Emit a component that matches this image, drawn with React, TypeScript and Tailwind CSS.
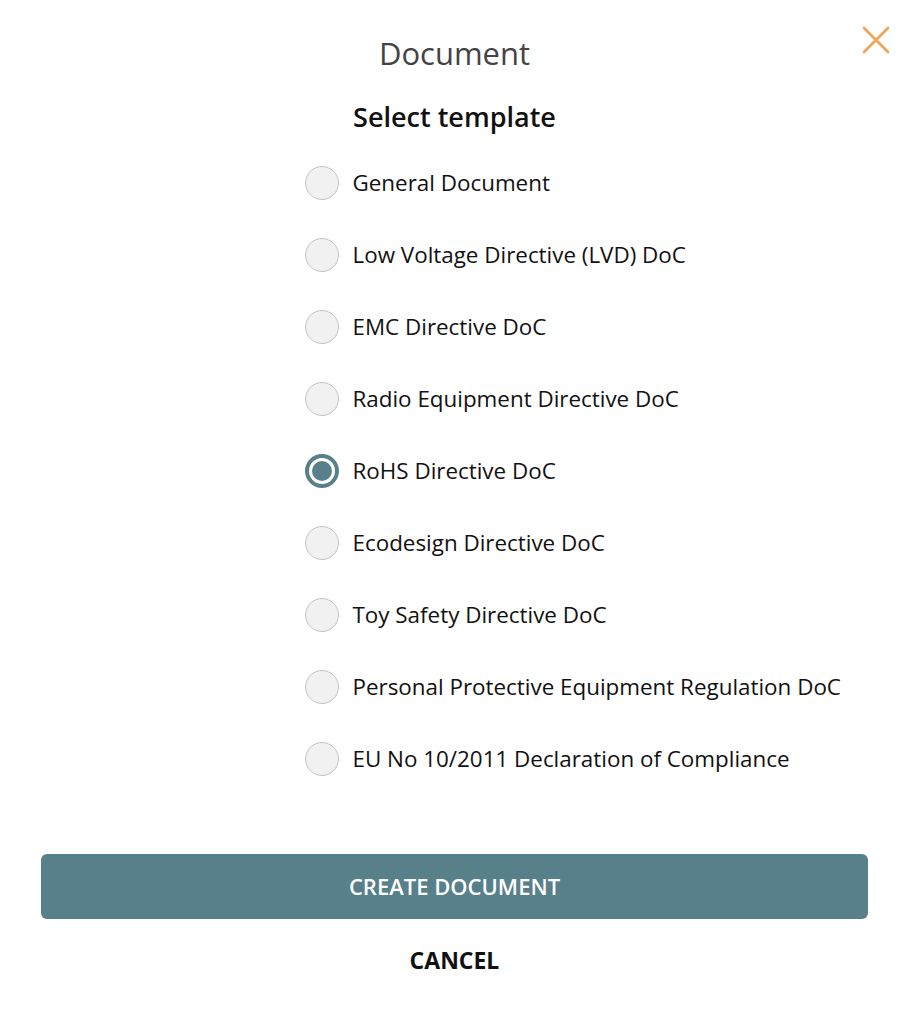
import React, { useState } from 'react';

const templates = [
  'General Document',
  'Low Voltage Directive (LVD) DoC',
  'EMC Directive DoC',
  'Radio Equipment Directive DoC',
  'RoHS Directive DoC',
  'Ecodesign Directive DoC',
  'Toy Safety Directive DoC',
  'Personal Protective Equipment Regulation DoC',
  'EU No 10/2011 Declaration of Compliance',
];

const Radio: React.FC<{ checked: boolean }> = ({ checked }) =>
  checked ? (
    <span className="flex h-[34px] w-[34px] shrink-0 items-center justify-center rounded-full bg-[#57808a]">
      <span className="flex h-[26px] w-[26px] items-center justify-center rounded-full bg-white">
        <span className="h-[20px] w-[20px] rounded-full bg-[#57808a]" />
      </span>
    </span>
  ) : (
    <span className="h-[34px] w-[34px] shrink-0 rounded-full border border-[#c4c4c4] bg-[#f1f1f1]" />
  );

export default function App() {
  const [selected, setSelected] = useState(4);

  return (
    <div className="relative min-h-[1016px] w-full bg-white font-['Open_Sans',sans-serif]">
      <button className="absolute right-[24px] top-[24px] text-[#f0a55c]" aria-label="Close">
        <svg width="32" height="32" viewBox="0 0 32 32" fill="none" stroke="currentColor" strokeWidth="2.8" strokeLinecap="round">
          <path d="M4 4L28 28M28 4L4 28" />
        </svg>
      </button>

      <div className="w-[909px]">
        <h1 className="pt-[31px] text-center text-[31px] leading-[44px] text-[#444]">Document</h1>
        <h2 className="mt-[24px] text-center text-[27px] font-semibold leading-[36px] text-[#111]">Select template</h2>

        <div className="mx-auto mt-[12px] w-[300px] whitespace-nowrap">
          {templates.map((t, i) => (
            <label
              key={t}
              className="flex h-[72px] cursor-pointer items-center gap-[14px]"
              onClick={() => setSelected(i)}
            >
              <Radio checked={selected === i} />
              <span className="text-[22.4px] text-[#111]">{t}</span>
            </label>
          ))}
        </div>

        <div className="px-[41px] pt-[59px]">
          <button className="h-[65px] w-full rounded-[6px] bg-[#57808a] text-[22px] font-semibold uppercase text-white">
            Create document
          </button>
          <button className="mx-auto mt-[24px] block text-[23px] font-bold uppercase text-[#111]">Cancel</button>
        </div>
      </div>
    </div>
  );
}
